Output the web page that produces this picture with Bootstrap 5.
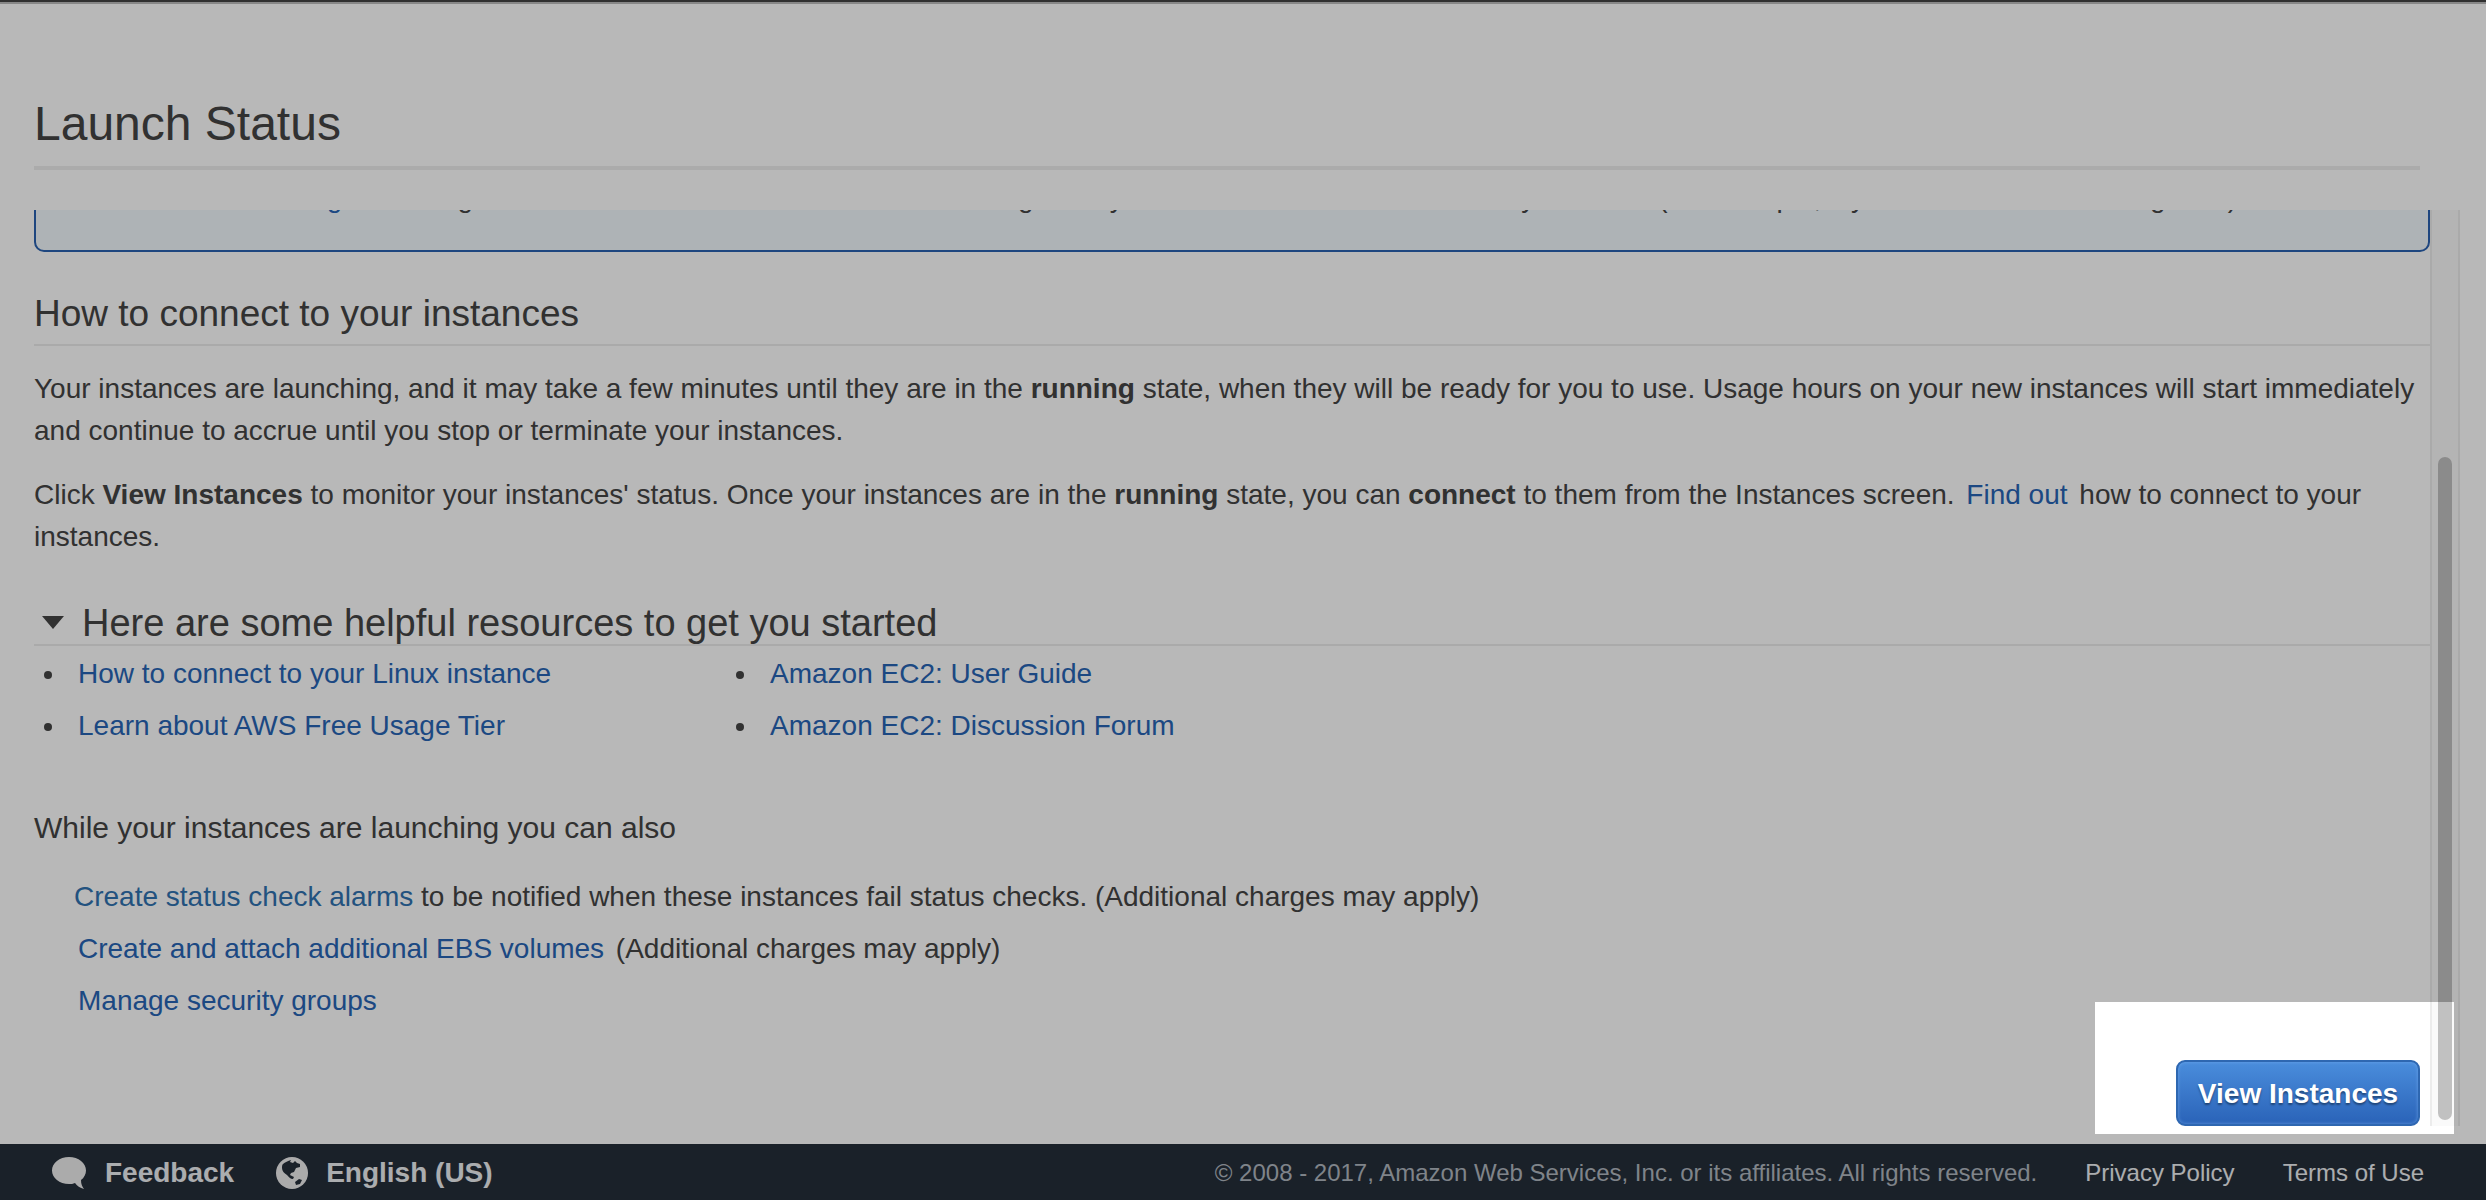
<!DOCTYPE html>
<html lang="en">
<head>
<meta charset="utf-8">
<meta name="viewport" content="width=device-width, initial-scale=1">
<title>Launch Status</title>
<link href="https://cdn.jsdelivr.net/npm/bootstrap@5.3.0/dist/css/bootstrap.min.css" rel="stylesheet">
<style>
  body { font-family: "Liberation Sans", Arial, sans-serif; font-size: 28px; line-height: 42px; color: #444; background: #fff; }
  a { color: #2765b5; text-decoration: none; }
  a:hover { text-decoration: underline; }
  .app-shell { border-top: 2px solid #303030; box-shadow: inset 0 2px 0 #bbb; }
  .page-head { padding: 94px 66px 40px 34px; }
  .page-title { font-size: 48px; line-height: 56px; padding-bottom: 14px; border-bottom: 4px solid #ededed; }
  .scroll-area { padding-left: 34px; padding-right: 26px; margin-bottom: 18px; }
  .alert-clip { height: 42px; }
  .billing-alert { background: #f1f8fd; border: 2px solid #2a62b0; border-radius: 10px; padding: 31px 36px 31px 143px; }
  .sec-title { font-size: 37px; line-height: 42px; margin-top: 41px; padding-bottom: 9px; border-bottom: 2px solid #ececec; }
  .copy p { margin: 22px 0 0; }
  .res-toggle { font-size: 38px; line-height: 42px; margin: 44px 0 2px; padding-left: 7px; gap: 17px; border-bottom: 2px solid #ececec; }
  .res-list { line-height: 52px; padding-left: 33px; flex: 0 0 692px; }
  .res-list li { padding-left: 11px; }
  .also-title { font-size: 30px; line-height: 42px; margin: 55px 0 22px; }
  .also-list { line-height: 52px; padding-left: 44px; }
  .alarm-link { color: #3072b0; margin-left: -4px; }
  .bar-track { width: 30px; border-left: 2px solid #ececec; border-right: 2px solid #ececec; background: #fafafa; padding: 247px 6px 6px; }
  .bar-thumb { width: 16px; border-radius: 8px; background: #c1c1c1; }
  .btn-view { height: 66px; width: 244px; padding: 2px 0 0; font-size: 28px; font-weight: 700; color: #fff; border: 2px solid #2e67b1; border-radius: 9px; background: linear-gradient(#4a8ddc, #2a63b8); text-shadow: 0 2px 2px rgba(0,0,0,.4); box-shadow: inset 0 0 3px 1px rgba(120,175,240,.4); }
  .btn-view:hover { color: #fff; background: #2a63b8; }
  .btn-row { padding-right: 10px; }
  .foot { background: #252e3a; height: 56px; padding: 2px 62px 0 50px; font-size: 24px; color: #b0b7bf; }
  .foot a { color: #eef0f3; }
  .foot-strong { font-size: 28px; font-weight: 700; gap: 17px; }
  .foot-strong + .foot-strong { margin-left: 41px; }
  /* Tour overlay: everything outside the highlighted box is dimmed */
  .spotlight { right: 32px; bottom: 66px; width: 359px; height: 132px; box-shadow: 0 0 0 4000px rgba(0,0,0,.28); pointer-events: none; z-index: 5; }
</style>
</head>
<body>
<div class="app-shell position-relative d-flex flex-column min-vh-100 overflow-hidden">
  <header class="page-head">
    <h1 class="page-title fw-normal m-0">Launch Status</h1>
  </header>

  <main class="scroll-area d-flex flex-grow-1">
    <div class="flex-grow-1 d-flex flex-column">
      <div class="alert-clip overflow-hidden d-flex flex-column justify-content-end">
        <div class="billing-alert flex-shrink-0"><a href="#">Create billing alerts</a> to get an email notification when estimated charges on your AWS bill exceed an amount you define (for example, if you exceed the free usage tier).</div>
      </div>

      <section class="copy">
        <h2 class="sec-title fw-normal mb-0">How to connect to your instances</h2>
        <p>Your instances are launching, and it may take a few minutes until they are in the <b>running</b> state, when they will be ready for you to use. Usage hours on your new instances will start immediately and continue to accrue until you stop or terminate your instances.</p>
        <p>Click <b>View Instances</b> to monitor your instances' status. Once your instances are in the <b>running</b> state, you can <b>connect</b> to them from the Instances screen. <a class="mx-1" href="#">Find out</a> how to connect to your instances.</p>
      </section>

      <section>
        <h2 class="res-toggle fw-normal d-flex align-items-center">
          <svg width="24" height="14" viewBox="0 0 24 14" aria-hidden="true"><path d="M1 0h22L12 13z" fill="#444"/></svg>
          Here are some helpful resources to get you started
        </h2>
        <div class="d-flex">
          <ul class="res-list mb-0">
            <li><a href="#">How to connect to your Linux instance</a></li>
            <li><a href="#">Learn about AWS Free Usage Tier</a></li>
          </ul>
          <ul class="res-list mb-0">
            <li><a href="#">Amazon EC2: User Guide</a></li>
            <li><a href="#">Amazon EC2: Discussion Forum</a></li>
          </ul>
        </div>
      </section>

      <section>
        <h3 class="also-title fw-normal">While your instances are launching you can also</h3>
        <ul class="also-list list-unstyled mb-0">
          <li><a class="alarm-link" href="#">Create status check alarms</a> to be notified when these instances fail status checks. (Additional charges may apply)</li>
          <li><a class="me-1" href="#">Create and attach additional EBS volumes</a> (Additional charges may apply)</li>
          <li><a href="#">Manage security groups</a></li>
        </ul>
      </section>

      <div class="btn-row d-flex justify-content-end mt-auto">
        <button type="button" class="btn btn-view">View Instances</button>
      </div>
    </div>
    <div class="bar-track d-flex flex-shrink-0"><div class="bar-thumb"></div></div>
  </main>

  <footer class="foot d-flex align-items-center">
    <a class="foot-strong d-flex align-items-center" href="#">
      <svg width="38" height="34" viewBox="0 0 38 34" aria-hidden="true"><path d="M19 1C9.500 1 2 7 2 14.500S9.500 28 19 28c2 0 4 0 6-1 2 3 5 5 9 6-2-3-3-5-3-9 3-2 5-6 5-9.500C36 7 28.500 1 19 1z" fill="#eee"/></svg>
      <span>Feedback</span></a>
    <a class="foot-strong d-flex align-items-center" href="#">
      <svg width="34" height="34" viewBox="0 0 34 34" aria-hidden="true"><circle cx="17" cy="17" r="16" fill="#eee"/><path d="M8 8c2-2 5-3 8-4l-1 2 3 1 2-2 2 2 3 1v3l-4 1-2 4-3 1-1 2 4 2-1 2c-3 0-4-2-6-4-3-2-5-4-5-7 0-2 0-3 1-4zM20 26l4-3 3 1-2 4-4 1z" fill="#252e3a"/></svg>
      <span>English (US)</span></a>
    <span class="ms-auto">© 2008 - 2017, Amazon Web Services, Inc. or its affiliates. All rights reserved.</span>
    <a class="ms-5" href="#">Privacy Policy</a>
    <a class="ms-5" href="#">Terms of Use</a>
  </footer>

  <div class="spotlight position-absolute"></div>
</div>
<script src="https://cdn.jsdelivr.net/npm/bootstrap@5.3.0/dist/js/bootstrap.bundle.min.js"></script>
</body>
</html>
